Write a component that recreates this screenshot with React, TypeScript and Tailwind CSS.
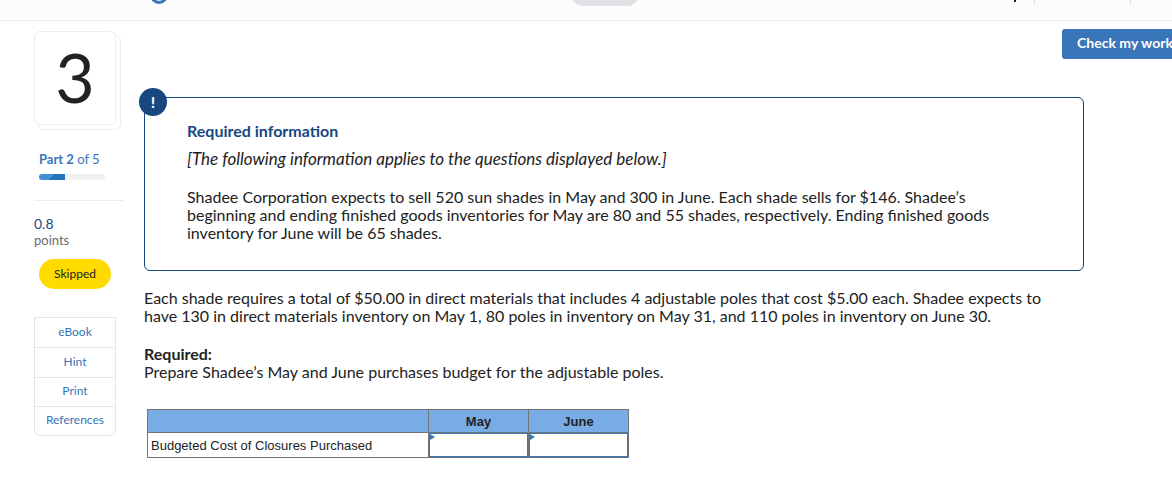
import { useState } from "react";

const TOOL_LINKS = [
  { label: "eBook", className: "h-[29px]" },
  { label: "Hint", className: "h-[30px] border-t" },
  { label: "Print", className: "h-[29px] border-t" },
  { label: "References", className: "h-[29px] border-t" },
];

const MONTHS = ["May", "June"];

const TopBar = () => (
  <header className="flex h-[21px] items-start overflow-hidden border-b border-[#ececec] bg-[#fcfcfc]">
    <div className="flex w-[571px] shrink-0 pl-[150px]">
      <div className="-mt-[14px] h-[18px] w-[18px] rounded-full border-[3px] border-[#3875b9] bg-[#dbe8f5]" />
    </div>
    <div className="-mt-[18px] h-6 w-[68px] rounded-full bg-[#e3e1e5]" />
    <div className="flex flex-1 justify-end pr-[41px]">
      <div className="mr-[18px] h-[2px] w-[2px] bg-[#222222]" />
      <div className="h-[5px] w-[97px] border-x border-[#e2e2e2]" />
    </div>
  </header>
);

const Sidebar = () => (
  <aside className="w-[90px] shrink-0 pt-[10px]">
    <div className="relative h-[99px] w-[87px]">
      <div className="absolute right-0 bottom-0 h-[95px] w-[84px] rounded-md border border-[#ececec] bg-white" />
      <div className="relative flex h-[94px] w-[82px] justify-center rounded-md border border-[#ececec] bg-white text-[68px] leading-[90px] text-[#222222]">
        3
      </div>
    </div>

    <div className="mt-5 pl-[5px]">
      <p id="part" className="text-[13px] leading-[18px] text-[#3875b9]">
        <b>Part 2</b> of 5
      </p>
      <div
        role="progressbar"
        aria-labelledby="part"
        aria-valuenow={2}
        aria-valuemax={5}
        className="mt-[6px] h-[6px] w-[66px] overflow-hidden rounded-full bg-[#f1f1f1]"
      >
        <div className="h-full w-2/5 bg-linear-135 from-[#4290d8] from-50% to-[#2573bb] to-50%" />
      </div>
    </div>

    <div className="mt-5 border-t border-[#ececec] pt-[15px]">
      <p className="text-sm leading-4 text-[#174880]">0.8</p>
      <p className="text-[13px] leading-4 text-[#6b6b6b]">points</p>
    </div>
    <div className="mt-[11px] ml-[5px] flex h-[30px] w-[72px] items-center justify-center rounded-full bg-[#ffdb00] text-xs text-[#222222]">
      Skipped
    </div>

    <nav className="mt-7 w-[82px] rounded-b-md border border-[#e6e6e6] text-xs">
      {TOOL_LINKS.map((link) => (
        <a
          key={link.label}
          href="#"
          className={`flex items-center justify-center border-[#e6e6e6] pb-[2px] text-[#3875b9] ${link.className}`}
        >
          {link.label}
        </a>
      ))}
    </nav>
  </aside>
);

const BudgetTable = () => {
  const [values, setValues] = useState<Record<string, string>>({});

  return (
    <table className="mt-7 ml-[3px] table-fixed border-collapse border border-[#757575] font-['Liberation_Sans',Arial,sans-serif] text-[13px] leading-4 text-[#222222]">
      <thead>
        <tr className="h-[23px] bg-[#79ace5]">
          <td className="w-[281px] border border-[#757575]" />
          {MONTHS.map((month) => (
            <th key={month} scope="col" className="w-[100px] border border-[#757575] pt-px font-bold">
              {month}
            </th>
          ))}
        </tr>
      </thead>
      <tbody>
        <tr className="h-[25px]">
          <th scope="row" className="border border-[#757575] px-[3px] pt-px text-left font-normal">
            Budgeted Cost of Closures Purchased
          </th>
          {MONTHS.map((month) => (
            <td key={month} className="relative border border-[#757575] p-0">
              <input
                type="text"
                aria-label={`Budgeted cost, ${month}`}
                value={values[month] ?? ""}
                onChange={(e) => setValues({ ...values, [month]: e.target.value })}
                className="block h-6 w-full border border-[#3875b9] bg-white px-2 text-right outline-none"
              />
              <svg
                viewBox="0 0 5 6"
                className="pointer-events-none absolute top-px left-px h-[6px] w-[5px]"
                aria-hidden="true"
              >
                <path d="M0 0L5 3L0 6Z" fill="#3875b9" />
              </svg>
            </td>
          ))}
        </tr>
      </tbody>
    </table>
  );
};

export default function App() {
  return (
    <div className="min-h-screen overflow-x-hidden bg-white font-[Lato,sans-serif] text-base leading-[18px] text-[#222222]">
      <TopBar />
      <div className="flex gap-5 pl-[34px]">
        <Sidebar />
        <main className="min-w-0 flex-1 pt-2">
          <div className="flex justify-end">
            <button
              type="button"
              className="-mr-4 h-[30px] w-[126px] rounded-[3px] bg-[#3875b9] pb-[2px] text-sm font-bold text-white"
            >
              Check my work
            </button>
          </div>

          <div className="mt-[38px] mr-[88px]">
            <section className="relative rounded-md border border-[#174880] pt-6 pr-10 pb-7 pl-[42px]">
              <span className="absolute -top-[10px] -left-[6px] flex h-7 w-7 items-center justify-center rounded-full bg-[#174880] font-bold text-white">
                !
              </span>
              <h2 className="font-bold text-[#174880]">Required information</h2>
              <p className="mt-[10px] text-[17px] leading-[18px] italic">
                [The following information applies to the questions displayed below.]
              </p>
              <p className="mt-5">
                Shadee Corporation expects to sell 520 sun shades in May and 300 in June. Each shade sells for $146. Shadee’s
                <br />
                beginning and ending finished goods inventories for May are 80 and 55 shades, respectively. Ending finished goods
                <br />
                inventory for June will be 65 shades.
              </p>
            </section>

            <p className="mt-[18px]">
              Each shade requires a total of $50.00 in direct materials that includes 4 adjustable poles that cost $5.00 each. Shadee expects to
              <br />
              have 130 in direct materials inventory on May 1, 80 poles in inventory on May 31, and 110 poles in inventory on June 30.
            </p>
            <h3 className="mt-5 font-bold">Required:</h3>
            <p>Prepare Shadee’s May and June purchases budget for the adjustable poles.</p>
            <BudgetTable />
          </div>
        </main>
      </div>
    </div>
  );
}
